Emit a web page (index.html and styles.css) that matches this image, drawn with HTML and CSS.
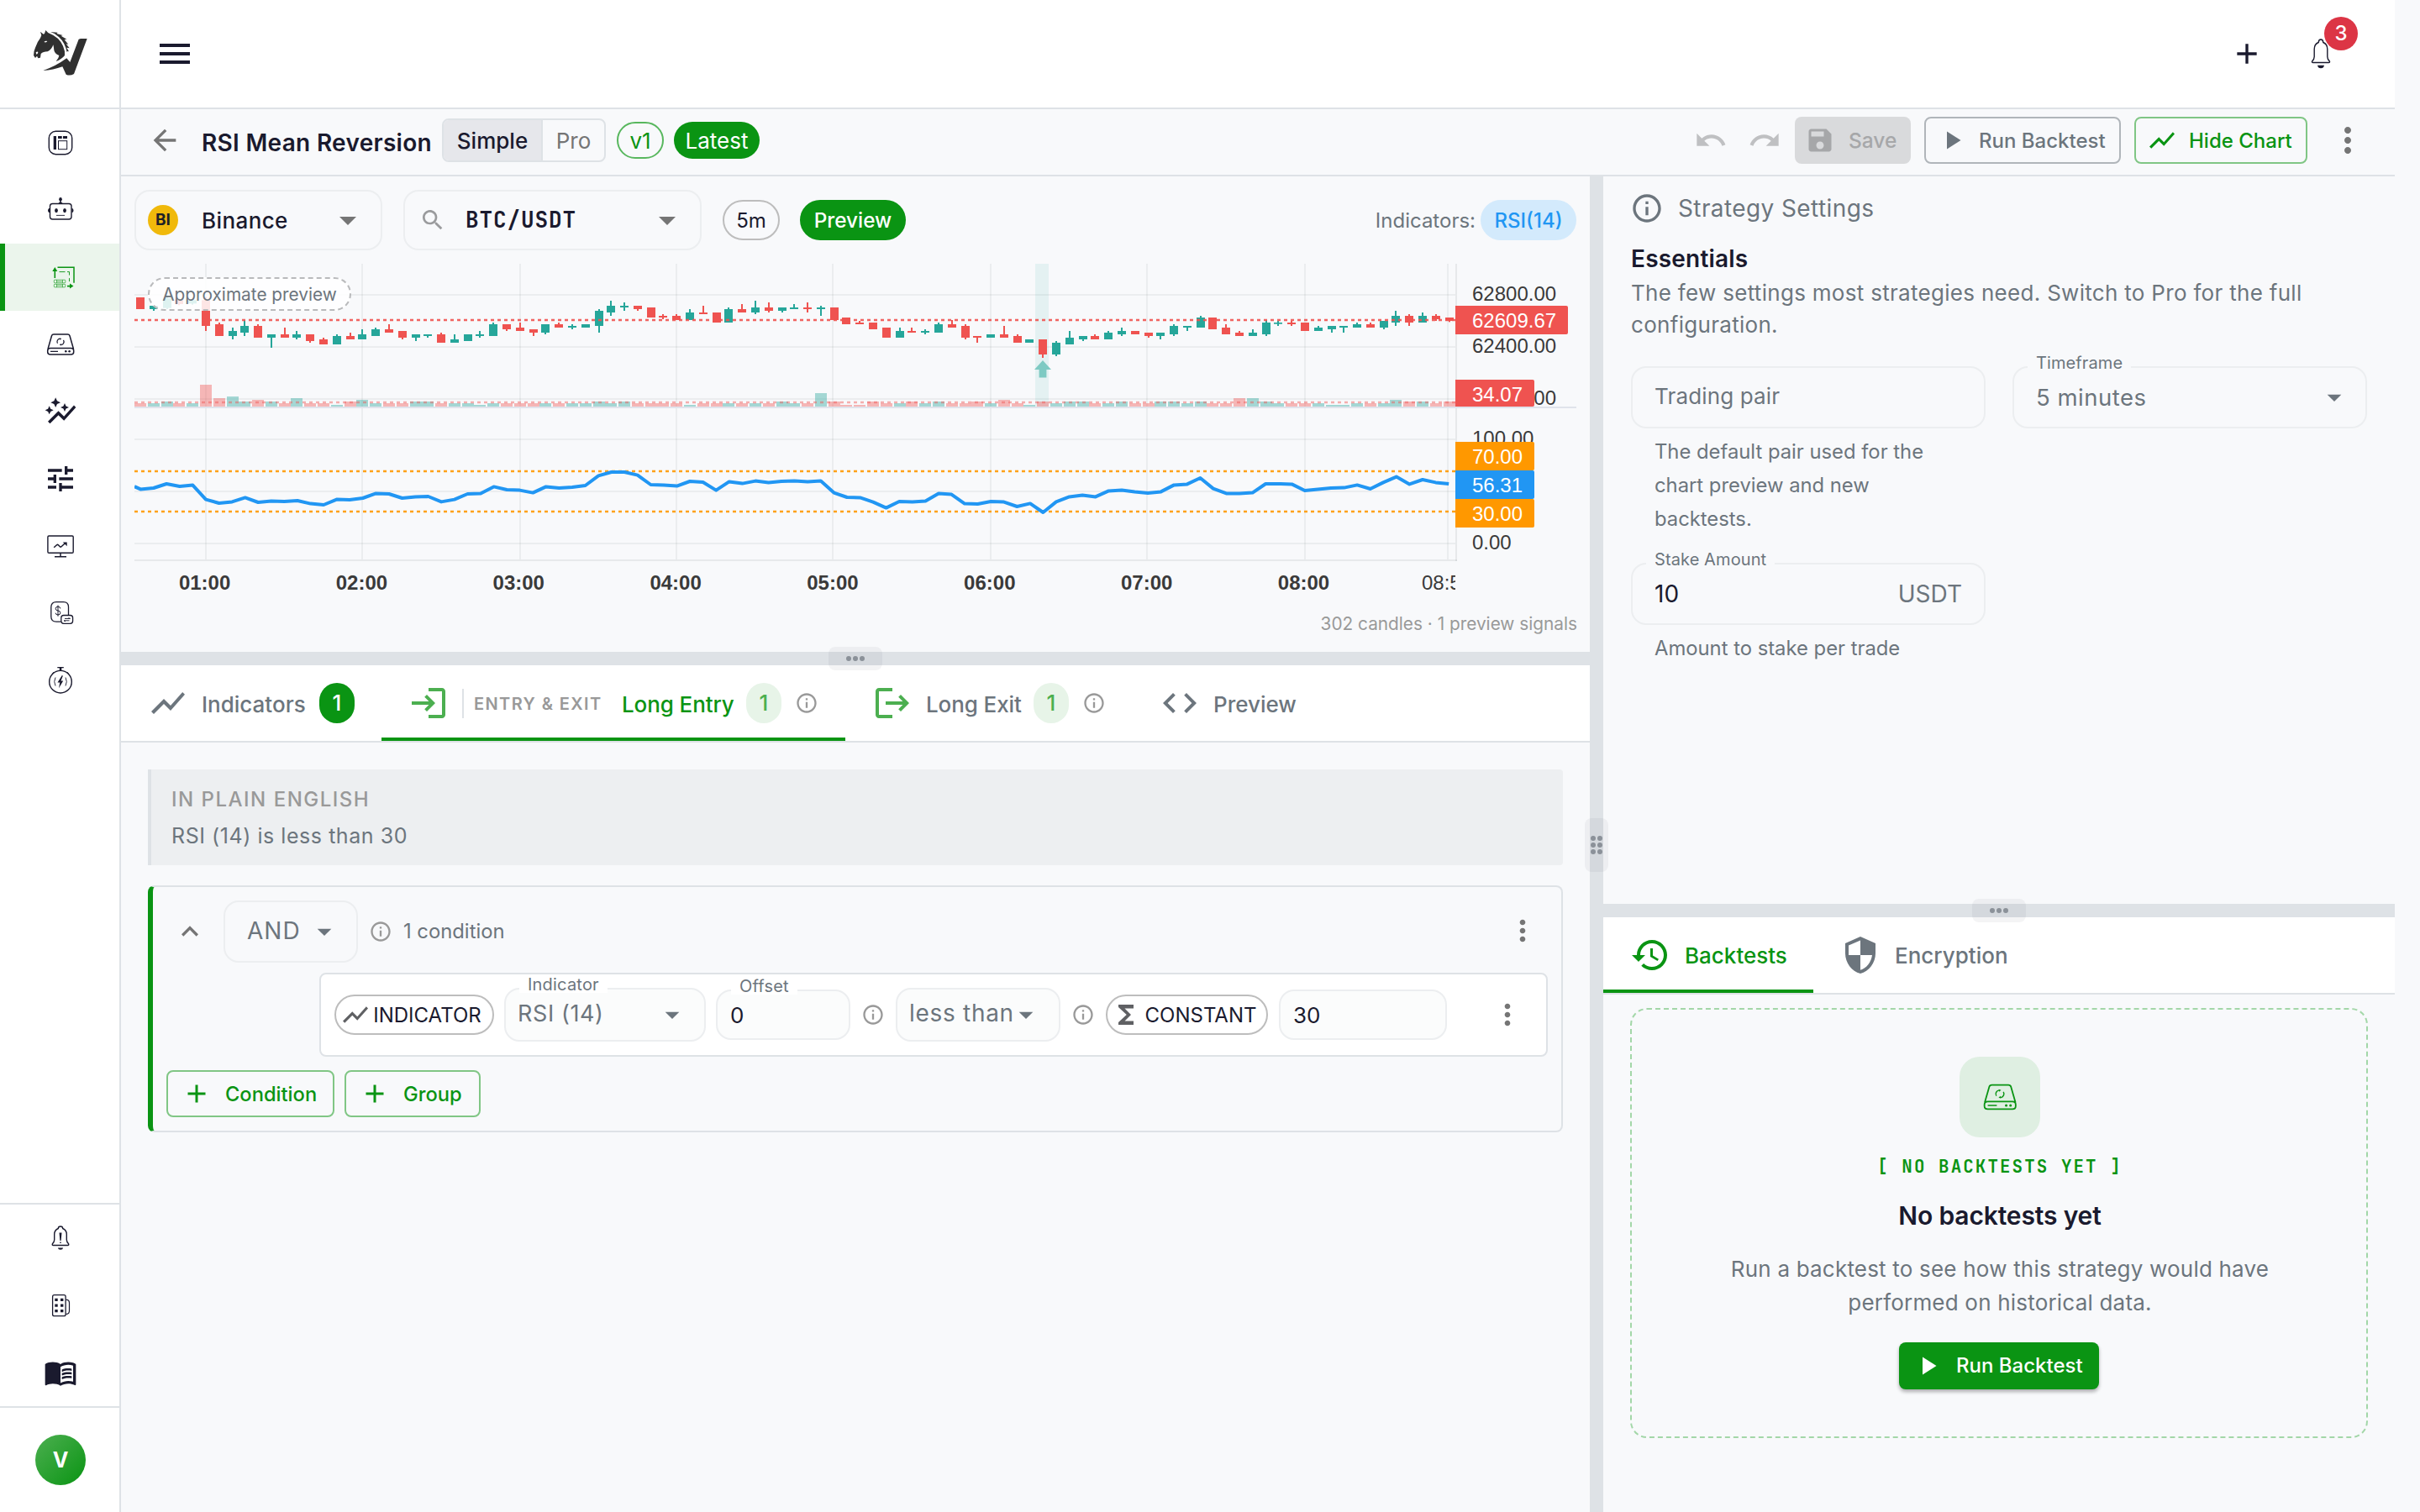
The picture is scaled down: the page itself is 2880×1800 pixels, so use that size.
FILE: index.html
```html
<!DOCTYPE html>
<html lang="en">
<head>
    <meta charset="UTF-8">
    <meta name="viewport" content="width=device-width, initial-scale=1.0">
    <title>RSI Mean Reversion</title>
    <link rel="stylesheet" href="styles.css">
</head>
<body>
    <!-- icon sprite -->
    <svg class="sprite" aria-hidden="true">
        <symbol id="i-menu" viewBox="0 0 24 24"><path d="M3 18h18v-2H3v2zm0-5h18v-2H3v2zm0-7v2h18V6H3z"/></symbol>
        <symbol id="i-back" viewBox="0 0 24 24"><path d="M20 11H7.83l5.59-5.59L12 4l-8 8 8 8 1.41-1.41L7.83 13H20v-2z"/></symbol>
        <symbol id="i-drop" viewBox="0 0 24 24"><path d="m7 10 5 5 5-5z"/></symbol>
        <symbol id="i-undo" viewBox="0 0 24 24"><path d="M12.5 8c-2.65 0-5.05.99-6.9 2.6L2 7v9h9l-3.62-3.62c1.39-1.16 3.16-1.88 5.12-1.88 3.54 0 6.55 2.31 7.6 5.5l2.37-.78C21.08 11.03 17.15 8 12.5 8z"/></symbol>
        <symbol id="i-redo" viewBox="0 0 24 24"><path d="M18.4 10.6C16.55 8.99 14.15 8 11.5 8c-4.65 0-8.58 3.03-9.96 7.22L3.9 16c1.05-3.19 4.05-5.5 7.6-5.5 1.95 0 3.73.72 5.12 1.88L13 16h9V7l-3.6 3.6z"/></symbol>
        <symbol id="i-save" viewBox="0 0 24 24"><path d="M17 3H5c-1.11 0-2 .9-2 2v14c0 1.1.89 2 2 2h14c1.1 0 2-.9 2-2V7l-4-4zm-5 16c-1.66 0-3-1.34-3-3s1.34-3 3-3 3 1.34 3 3-1.34 3-3 3zm3-10H5V5h10v4z"/></symbol>
        <symbol id="i-play" viewBox="0 0 24 24"><path d="M8 5v14l11-7z"/></symbol>
        <symbol id="i-chart" viewBox="0 0 24 24"><path d="m3.5 18.49 6-6.01 4 4L22 6.92l-1.41-1.41-7.09 7.97-4-4L2 16.99z"/></symbol>
        <symbol id="i-more" viewBox="0 0 24 24"><path d="M12 8c1.1 0 2-.9 2-2s-.9-2-2-2-2 .9-2 2 .9 2 2 2zm0 2c-1.1 0-2 .9-2 2s.9 2 2 2 2-.9 2-2-.9-2-2-2zm0 6c-1.1 0-2 .9-2 2s.9 2 2 2 2-.9 2-2-.9-2-2-2z"/></symbol>
        <symbol id="i-info" viewBox="0 0 24 24"><path d="M11 7h2v2h-2zm0 4h2v6h-2zm1-9C6.48 2 2 6.48 2 12s4.48 10 10 10 10-4.48 10-10S17.52 2 12 2zm0 18c-4.41 0-8-3.59-8-8s3.59-8 8-8 8 3.59 8 8-3.59 8-8 8z"/></symbol>
        <symbol id="i-add" viewBox="0 0 24 24"><path d="M19 13h-6v6h-2v-6H5v-2h6V5h2v6h6v2z"/></symbol>
        <symbol id="i-search" viewBox="0 0 24 24"><path d="M15.5 14h-.79l-.28-.27C15.41 12.59 16 11.11 16 9.5 16 5.91 13.09 3 9.5 3S3 5.91 3 9.5 5.91 16 9.5 16c1.61 0 3.09-.59 4.23-1.57l.27.28v.79l5 4.99L20.49 19l-4.99-5zm-6 0C7.01 14 5 11.99 5 9.5S7.01 5 9.5 5 14 7.01 14 9.5 11.99 14 9.5 14z"/></symbol>
        <symbol id="i-up" viewBox="0 0 24 24"><path d="m12 8-6 6 1.41 1.41L12 10.83l4.59 4.58L18 14z"/></symbol>
        <symbol id="i-login" viewBox="0 0 24 24"><path d="M11 7 9.6 8.4l2.6 2.6H2v2h10.2l-2.6 2.6L11 17l5-5-5-5zm9 12h-8v2h8c1.1 0 2-.9 2-2V5c0-1.1-.9-2-2-2h-8v2h8v14z"/></symbol>
        <symbol id="i-logout" viewBox="0 0 24 24"><path d="m17 7-1.41 1.41L18.17 11H8v2h10.17l-2.58 2.58L17 17l5-5zM4 5h8V3H4c-1.1 0-2 .9-2 2v14c0 1.1.9 2 2 2h8v-2H4V5z"/></symbol>
        <symbol id="i-code" viewBox="0 0 24 24"><path d="M9.4 16.6 4.8 12l4.6-4.6L8 6l-6 6 6 6 1.4-1.4zm5.2 0 4.6-4.6-4.6-4.6L16 6l6 6-6 6-1.4-1.4z"/></symbol>
        <symbol id="i-history" viewBox="0 0 24 24"><path d="M13 3c-4.97 0-9 4.03-9 9H1l3.89 3.89.07.14L9 12H6c0-3.87 3.13-7 7-7s7 3.13 7 7-3.13 7-7 7c-1.93 0-3.68-.79-4.94-2.06l-1.42 1.42C8.27 19.99 10.51 21 13 21c4.97 0 9-4.03 9-9s-4.03-9-9-9zm-1 5v5l4.28 2.54.72-1.21-3.5-2.08V8H12z"/></symbol>
        <symbol id="i-shield" viewBox="0 0 24 24"><path d="M12 1 3 5v6c0 5.55 3.84 10.74 9 12 5.16-1.26 9-6.45 9-12V5l-9-4zm0 10.99h7c-.53 4.12-3.28 7.79-7 8.94V12H5V6.3l7-3.11v8.8z"/></symbol>
        <symbol id="i-sigma" viewBox="0 0 24 24"><path d="M18 4H6v2l6.5 6L6 18v2h12v-3h-7l5-5-5-5h7z"/></symbol>
        <symbol id="i-tune" viewBox="0 0 24 24"><path d="M3 17v2h6v-2H3zM3 5v2h10V5H3zm10 16v-2h8v-2h-8v-2h-2v6h2zM7 9v2H3v2h4v2h2V9H7zm14 4v-2H11v2h10zm-6-4h2V7h4V5h-4V3h-2v6z"/></symbol>
        <symbol id="i-graph" viewBox="0 0 24 24"><path d="M14.06 9.94 12 9l2.06-.94L15 6l.94 2.06L18 9l-2.06.94L15 12l-.94-2.06zM4 14l.94-2.06L7 11l-2.06-.94L4 8l-.94 2.06L1 11l2.06.94L4 14zm4.5-5 1.09-2.41L12 5.5 9.59 4.41 8.5 2 7.41 4.41 5 5.5l2.41 1.09L8.5 9zm-4 11.5 6-6.01 4 4L23 8.93l-1.41-1.41-7.09 7.97-4-4L3 19l1.5 1.5z"/></symbol>
        <symbol id="i-book" viewBox="0 0 24 24"><path d="M21 5c-1.11-.35-2.33-.5-3.5-.5-1.95 0-4.05.4-5.5 1.5-1.45-1.1-3.55-1.5-5.5-1.5S2.45 4.9 1 6v14.65c0 .25.25.5.5.5.1 0 .15-.05.25-.05C3.1 20.45 5.05 20 6.5 20c1.95 0 4.05.4 5.5 1.5 1.35-.85 3.8-1.5 5.5-1.5 1.65 0 3.35.3 4.75 1.05.1.05.15.05.25.05.25 0 .5-.25.5-.5V6c-.6-.45-1.25-.75-2-1zm0 13.5c-1.1-.35-2.3-.5-3.5-.5-1.7 0-4.15.65-5.5 1.5V8c1.35-.85 3.8-1.5 5.5-1.5 1.2 0 2.4.15 3.5.5v11.5z"/><path d="M17.5 10.5c.88 0 1.73.09 2.5.26V9.24c-.79-.15-1.64-.24-2.5-.24-1.7 0-3.24.29-4.5.83v1.66c1.13-.64 2.7-.99 4.5-.99zM13 12.49v1.66c1.13-.64 2.7-.99 4.5-.99.88 0 1.73.09 2.5.26V11.9c-.79-.15-1.64-.24-2.5-.24-1.7 0-3.24.3-4.5.83zM17.5 14.33c-1.7 0-3.24.29-4.5.83v1.66c1.13-.64 2.7-.99 4.5-.99.88 0 1.73.09 2.5.26v-1.52c-.79-.16-1.64-.24-2.5-.24z"/></symbol>

        <symbol id="i-dash" viewBox="0 0 40 40">
            <rect x="6.300" y="6.300" width="27.400" height="27.400" rx="8" fill="none" stroke="currentColor" stroke-width="1.400"/>
            <path d="M11.700 12H15v16h-3.300zM17 12h4.700v3H17zM23 12h5v3h-5z"/>
            <rect x="17.500" y="17.700" width="10.200" height="10" fill="none" stroke="currentColor"/>
        </symbol>
        <symbol id="i-bot" viewBox="0 0 40 40">
            <rect x="7.500" y="12.500" width="25.500" height="18.500" rx="3" fill="none" stroke="currentColor" stroke-width="1.400"/>
            <ellipse cx="20" cy="7.200" rx="1.800" ry="2.200"/><path d="M19.300 8h1.400v2.200l2.300 2.300h-6l2.300-2.300z"/>
            <path d="M7 18H6.200Q5 19 5 20.500T6.200 23H7zM33.500 18h.8q1.200 1 1.200 2.500T34.300 23h-.8z"/>
            <ellipse cx="15" cy="20.600" rx="1.900" ry="2.600"/><ellipse cx="25" cy="20.600" rx="1.900" ry="2.600"/>
            <path d="M15 25.900h10v.9H15z"/>
        </symbol>
        <symbol id="i-strategy" viewBox="0 0 40 40">
            <path d="M16.500 8.300H36v18.500" fill="none" stroke="currentColor" stroke-width="1.500"/>
            <path d="M13.300 8l3 5h-2.200v8h-1.600v-8h-2.200zM35.500 30.600l-4.500 3v-2.200h-3v-1.600h3v-2.200z"/>
            <path d="M18.500 13.600h7m2.500 0h2.500v4m0 3.500v4" fill="none" stroke="currentColor" stroke-width=".9"/>
            <g fill="none" stroke="currentColor" stroke-width=".6"><rect x="12.300" y="23.200" width="13.500" height="3.600" rx=".8"/><rect x="12.300" y="28.300" width="13.500" height="3.600" rx=".8"/><path d="M15.500 23.200v3.600m7-3.600v3.600m-7 1.500v3.600m7-3.600v3.600M15.500 25h7m-7 5h7"/></g>
        </symbol>
        <symbol id="i-disk" viewBox="0 0 40 40">
            <path d="M5 25.500 9.500 9.800Q10 8 12 8h16.500q2 0 2.500 1.800l4.500 15.700M8 24.500h24.500q3.200 0 3.200 3v1.500q0 3-3.200 3H8q-3.300 0-3.300-3v-1.500q0-3 3.300-3z" fill="none" stroke="currentColor" stroke-width="1.500"/>
            <path d="M19.200 13.200a3.700 3.700 0 0 0-2.700 5.600m4.300 1.700a3.700 3.700 0 0 0 2.700-5.600" fill="none" stroke="currentColor" stroke-width="1.200"/>
            <path d="M19 12.200l2.300 1-2.100 1.500zM21 21.500l-2.300-1 2.100-1.500zM8 27.700h9v1.200H8z"/>
            <circle cx="26.300" cy="28.300" r="1.300"/><circle cx="30.600" cy="28.300" r="1.300"/>
        </symbol>
        <symbol id="i-monitor" viewBox="0 0 40 40">
            <rect x="4.900" y="8" width="30.300" height="20.300" rx="1.300" fill="none" stroke="currentColor" stroke-width="1.400"/>
            <path d="M20 28.500v4M13 32.700h14" fill="none" stroke="currentColor" stroke-width="1.500"/>
            <path d="M12.200 21.800l3.300-3q1-.8 1.900 0l1.900 1.900q.8.800 1.700 0l5-4.500" fill="none" stroke="currentColor" stroke-width="1.500"/>
            <path d="M22.800 15.400h4.900v4.800l-2-2z"/>
        </symbol>
        <symbol id="i-coin" viewBox="0 0 40 40">
            <path d="M20.500 30.200H15Q8.800 30.200 8.800 24V13Q8.800 6.600 15 6.600h8.500q6 0 6 6v9.600" fill="none" stroke="currentColor" stroke-width="1.300"/>
            <rect x="20.800" y="22.500" width="13.800" height="9.800" rx="3" fill="none" stroke="currentColor" stroke-width="1.300"/>
            <path d="M19.800 14.500q0-2.300-2.800-2.300t-2.800 2.300 2.800 2.500 2.800 2.600-2.800 2.400-2.800-2.300M17 10.500v13.200" fill="none" stroke="currentColor"/>
            <path d="M25 26.500h6.500l-2-1M30.500 28.800H24l2 1" fill="none" stroke="currentColor" stroke-width=".9"/>
        </symbol>
        <symbol id="i-timer" viewBox="0 0 40 40">
            <circle cx="20" cy="21.700" r="13.300" fill="none" stroke="currentColor" stroke-width="1.400"/>
            <path d="M16.300 4h7.500v1.300h-2.500V8h-2.500V5.300h-2.500zM9.500 12.800l2-2.800 1.200 1zM30.500 12.800l-2-2.800-1.200 1z"/>
            <path d="M21.800 14l-5.300 8.600h2.800L18 29.300l5.200-8.700h-2.700l2.400-6.100z"/>
            <path d="M14 16.500q-2.600 5 0 10M26 16.500q2.600 5 0 10" fill="none" stroke="currentColor" stroke-width=".9"/>
        </symbol>
        <symbol id="i-alert" viewBox="0 0 40 40">
            <path d="M17.300 8.500Q17.300 6 20 6t2.700 2.500q4.600 1.800 4.600 7V22q0 2.500 2.300 4.800.6 1.700-1 1.700H11.400q-1.600 0-1-1.700 2.300-2.300 2.300-4.800v-6.500q0-5.200 4.600-7z" fill="none" stroke="currentColor" stroke-width="1.400"/>
            <path d="M18.500 13.500h3L20.600 23h-1.200zM19.300 24.500h1.400V26h-1.400zM16.800 31.500h6.400q-.5 2.300-3.200 2.300t-3.200-2.300z"/>
        </symbol>
        <symbol id="i-building" viewBox="0 0 40 40">
            <rect x="10.600" y="7.700" width="15.500" height="25" rx="2" fill="none" stroke="currentColor" stroke-width="1.300"/>
            <path d="M26.500 13.300h.8q3.200 0 3.200 4v9q0 4-3.200 4h-.8" fill="none" stroke="currentColor" stroke-width="1.200"/>
            <path d="M13.300 11.700h3.400v3.300h-3.400zM20 11.700h3.400v3.300H20zM13.300 18.400h3.400v3.300h-3.400zM20 18.400h3.400v3.300H20zM13.300 25h3.400v3.300h-3.400zM20 25h3.400v3.300H20z"/>
        </symbol>
        <symbol id="i-bell" viewBox="0 0 40 40">
            <path d="M17.200 6.500Q17.400 3 20 3t2.800 3.500q5 2 5 8v9q0 2.800 2.600 5.600.5 1.400-1 1.400H10.600q-1.500 0-1-1.400 2.600-2.800 2.600-5.600v-9q0-6 5-8z" fill="none" stroke="currentColor" stroke-width="1.400"/>
            <path d="M16 33.700h8q-.6 3.600-4 3.600t-4-3.600z"/>
        </symbol>
    </svg>

    <div class="app">
        <aside class="sidebar">
            <div class="logo">
                <svg viewBox="60 48 192 162" width="64" height="54">
                    <path class="logo-ink" d="M103 48Q111 58 118 60Q150 72 165 104Q173 122 171 138Q160 152 140 159Q150 148 151 138Q137 134 133 120Q132 108 130 100Q124 118 110 124Q94 124 86 132L84 146L76 148L72 140L66 147L60 138Q60 122 66 110Q74 88 84 76L88 66L84 53L95 62L99 60z"/>
                    <path class="logo-ink" d="M120 54L146 56L142 60L164 66L158 68L178 80L170 82L184 98L176 97L188 112L178 110L186 124Q180 122 179 126Q172 92 150 72Q136 58 120 54z"/>
                    <path class="logo-ink" d="M228 78H251L204 204Q190 212 176 206L163 178Q130 190 94 192Q140 176 178 148L190 162L221 80z"/>
                    <path class="logo-gap" d="M97 90Q103 84 109 87Q105 94 97 90zM68 127Q74 122 76 126Q76 133 70 134z"/>
                </svg>
            </div>
            <nav class="side-nav">
                <a class="side-item"><svg><use href="#i-dash"/></svg></a>
                <a class="side-item"><svg><use href="#i-bot"/></svg></a>
                <a class="side-item active"><svg><use href="#i-strategy"/></svg></a>
                <a class="side-item"><svg><use href="#i-disk"/></svg></a>
                <a class="side-item"><svg><use href="#i-graph"/></svg></a>
                <a class="side-item"><svg><use href="#i-tune"/></svg></a>
                <a class="side-item"><svg><use href="#i-monitor"/></svg></a>
                <a class="side-item"><svg><use href="#i-coin"/></svg></a>
                <a class="side-item"><svg><use href="#i-timer"/></svg></a>
            </nav>
            <nav class="side-nav side-bottom">
                <a class="side-item"><svg><use href="#i-alert"/></svg></a>
                <a class="side-item"><svg><use href="#i-building"/></svg></a>
                <a class="side-item"><svg><use href="#i-book"/></svg></a>
            </nav>
            <div class="side-user"><span class="avatar">V</span></div>
        </aside>

        <div class="main">
            <header class="topbar">
                <svg class="ic48"><use href="#i-menu"/></svg>
                <div class="topbar-right">
                    <svg class="ic40"><use href="#i-add"/></svg>
                    <div class="bell">
                        <svg class="ic40"><use href="#i-bell"/></svg>
                        <span class="bell-badge">3</span>
                    </div>
                </div>
            </header>

            <div class="toolbar">
                <svg class="ic40 grey"><use href="#i-back"/></svg>
                <h1 class="title">RSI Mean Reversion</h1>
                <div class="toggle"><span class="toggle-on">Simple</span><span>Pro</span></div>
                <span class="chip chip-outline">v1</span>
                <span class="chip chip-solid">Latest</span>
                <div class="toolbar-right">
                    <svg class="ic40 faded"><use href="#i-undo"/></svg>
                    <svg class="ic40 faded redo"><use href="#i-redo"/></svg>
                    <button class="btn btn-save"><svg><use href="#i-save"/></svg>Save</button>
                    <button class="btn btn-run"><svg><use href="#i-play"/></svg>Run Backtest</button>
                    <button class="btn btn-hide"><svg><use href="#i-chart"/></svg>Hide Chart</button>
                    <svg class="ic48 grey"><use href="#i-more"/></svg>
                </div>
            </div>

            <div class="workspace">
                <div class="col-left">
                    <section class="chart-panel">
                        <div class="chart-controls">
                            <div class="select exchange">
                                <span class="coin">BI</span>
                                <span class="select-text">Binance</span>
                                <svg class="ic48 grey"><use href="#i-drop"/></svg>
                            </div>
                            <div class="select pair">
                                <svg class="search"><use href="#i-search"/></svg>
                                <span class="select-text mono">BTC/USDT</span>
                                <svg class="ic48 grey"><use href="#i-drop"/></svg>
                            </div>
                            <span class="chip chip-tf">5m</span>
                            <span class="chip chip-preview">Preview</span>
                            <div class="indicators">Indicators:<span class="chip chip-rsi">RSI(14)</span></div>
                        </div>
                        <div class="chart">
                            <svg id="chart" viewBox="0 7 858 203" width="1716" height="406"></svg>
                            <span class="approx">Approximate preview</span>
                        </div>
                        <div class="chart-foot">302 candles · 1 preview signals</div>
                    </section>

                    <div class="split-h"><span class="grip"><i></i><i></i><i></i></span></div>

                    <div class="tabs tabs-rules">
                        <div class="tab t-ind">
                            <svg class="ic48"><use href="#i-chart"/></svg>
                            <span class="tab-text">Indicators</span>
                            <span class="count count-solid">1</span>
                        </div>
                        <div class="tab t-entry active">
                            <svg class="ic48 green"><use href="#i-login"/></svg>
                            <span class="tab-group">ENTRY &amp; EXIT</span>
                            <span class="tab-text">Long Entry</span>
                            <span class="count">1</span>
                            <svg class="info"><use href="#i-info"/></svg>
                        </div>
                        <div class="tab t-exit">
                            <svg class="ic48 green"><use href="#i-logout"/></svg>
                            <span class="tab-text">Long Exit</span>
                            <span class="count">1</span>
                            <svg class="info"><use href="#i-info"/></svg>
                        </div>
                        <div class="tab t-prev">
                            <svg class="ic48"><use href="#i-code"/></svg>
                            <span class="tab-text">Preview</span>
                        </div>
                    </div>

                    <section class="editor">
                        <div class="plain">
                            <div class="plain-label">IN PLAIN ENGLISH</div>
                            <div class="plain-text">RSI (14) is less than 30</div>
                        </div>

                        <div class="group">
                            <div class="group-head">
                                <svg class="ic40 grey"><use href="#i-up"/></svg>
                                <div class="select logic"><span class="select-text">AND</span><svg class="ic40"><use href="#i-drop"/></svg></div>
                                <svg class="info"><use href="#i-info"/></svg>
                                <span class="group-count">1 condition</span>
                                <svg class="ic40 grey more"><use href="#i-more"/></svg>
                            </div>
                            <div class="condition">
                                <span class="chip chip-type"><svg class="type-ic"><use href="#i-chart"/></svg>INDICATOR</span>
                                <div class="select f-ind">
                                    <label>Indicator</label>
                                    <span class="select-text">RSI (14)</span>
                                    <svg class="ic40"><use href="#i-drop"/></svg>
                                </div>
                                <div class="select f-off">
                                    <label>Offset</label>
                                    <span class="select-text">0</span>
                                </div>
                                <svg class="info"><use href="#i-info"/></svg>
                                <div class="select f-op">
                                    <span class="select-text">less than</span>
                                    <svg class="ic40"><use href="#i-drop"/></svg>
                                </div>
                                <svg class="info"><use href="#i-info"/></svg>
                                <span class="chip chip-type chip-const"><svg class="type-ic"><use href="#i-sigma"/></svg>CONSTANT</span>
                                <div class="select f-val"><span class="select-text">30</span></div>
                                <svg class="ic40 grey more"><use href="#i-more"/></svg>
                            </div>
                            <div class="group-actions">
                                <button class="btn btn-add btn-cond"><svg><use href="#i-add"/></svg>Condition</button>
                                <button class="btn btn-add"><svg><use href="#i-add"/></svg>Group</button>
                            </div>
                        </div>
                    </section>
                </div>

                <div class="split-v"><span class="grip grip-v"><i></i><i></i><i></i><i></i><i></i><i></i></span></div>

                <div class="col-right">
                    <section class="settings">
                        <div class="settings-head"><svg class="ic40"><use href="#i-info"/></svg>Strategy Settings</div>
                        <h2>Essentials</h2>
                        <p class="settings-desc">The few settings most strategies need. Switch to Pro for the full configuration.</p>
                        <div class="settings-grid">
                            <div class="cell">
                                <div class="select field"><span class="select-text ph">Trading pair</span></div>
                                <p class="helper">The default pair used for the chart preview and new backtests.</p>
                            </div>
                            <div class="cell">
                                <div class="select field">
                                    <label>Timeframe</label>
                                    <span class="select-text tf">5 minutes</span>
                                    <svg class="ic40"><use href="#i-drop"/></svg>
                                </div>
                            </div>
                            <div class="cell">
                                <div class="select field">
                                    <label>Stake Amount</label>
                                    <span class="select-text dark">10</span>
                                    <span class="unit">USDT</span>
                                </div>
                                <p class="helper">Amount to stake per trade</p>
                            </div>
                        </div>
                    </section>

                    <div class="split-h"><span class="grip"><i></i><i></i><i></i></span></div>

                    <div class="tabs">
                        <div class="tab t-back active">
                            <svg class="ic48"><use href="#i-history"/></svg>
                            <span class="tab-text">Backtests</span>
                        </div>
                        <div class="tab t-enc">
                            <svg class="ic48"><use href="#i-shield"/></svg>
                            <span class="tab-text">Encryption</span>
                        </div>
                    </div>

                    <section class="empty">
                        <div class="empty-tile"><svg class="ic48"><use href="#i-disk"/></svg></div>
                        <div class="empty-tag">[ NO BACKTESTS YET ]</div>
                        <h3>No backtests yet</h3>
                        <p>Run a backtest to see how this strategy would have performed on historical data.</p>
                        <button class="btn btn-primary"><svg><use href="#i-play"/></svg>Run Backtest</button>
                    </section>
                </div>
            </div>
        </div>
    </div>

    <script src="chart.js"></script>
</body>
</html>
```

FILE: styles.css
```css
:root {
    --green: #0a9413;
    --text: #1a1a2e;
    --muted: #6c757d;
    --grey: #757575;
    --line: #dee2e6;
    --soft-line: #eceef0;
    --bg: #f8f9fb;
    --mono: 'JetBrains Mono', 'DejaVu Sans Mono', monospace;
}

* {
    margin: 0;
    padding: 0;
    box-sizing: border-box;
}

body {
    background: var(--bg);
    color: var(--text);
    font-family: Inter, 'Liberation Sans', sans-serif;
    font-size: 28px;
    overflow: hidden;
}

svg {
    display: block;
    flex: none;
    fill: currentColor;
}

.sprite {
    width: 0;
    height: 0;
    position: absolute;
}

.ic40 { width: 40px; height: 40px; }
.ic48 { width: 48px; height: 48px; }
.grey { color: var(--grey); }
.green { color: #4caf50; }

.app {
    display: flex;
    width: 2850px;
    height: 1800px;
}

/* sidebar */
.sidebar {
    display: flex;
    flex-direction: column;
    width: 144px;
    background: #fff;
    border-right: 2px solid var(--line);
}

.logo {
    height: 130px;
    padding: 36px 0 0 40px;
    border-bottom: 2px solid var(--line);
}

.logo-ink { fill: #303030; }
.logo-gap { fill: #fff; }

.side-item {
    display: flex;
    align-items: center;
    justify-content: center;
    width: 142px;
    height: 80px;
    padding-left: 2px;
}

    .side-item svg {
        width: 40px;
        height: 40px;
    }

    .side-item.active {
        background: #ebf5ec;
        color: var(--green);
        box-shadow: inset 6px 0 0 var(--green);
    }

.side-bottom {
    margin-top: auto;
    border-top: 2px solid var(--line);
    border-bottom: 2px solid var(--line);
}

.side-user {
    height: 124px;
    padding: 32px 0 0 42px;
}

.avatar {
    display: flex;
    align-items: center;
    justify-content: center;
    width: 60px;
    height: 60px;
    border-radius: 50%;
    background: linear-gradient(135deg, #4caf50, #0a9413);
    color: #fff;
    font-size: 25px;
    font-weight: 700;
}

/* top bar */
.main {
    flex: 1;
    display: flex;
    flex-direction: column;
    min-width: 0;
}

.topbar {
    display: flex;
    align-items: center;
    justify-content: space-between;
    height: 130px;
    padding: 0 68px 0 40px;
    background: #fff;
    border-bottom: 2px solid var(--line);
}

.topbar-right {
    display: flex;
    gap: 48px;
}

.bell {
    position: relative;
}

.bell-badge {
    position: absolute;
    left: 24px;
    top: -24px;
    width: 40px;
    height: 40px;
    border-radius: 20px;
    background: #dc3545;
    color: #fff;
    font-size: 24px;
    font-weight: 500;
    line-height: 40px;
    text-align: center;
}

/* toolbar */
.toolbar {
    display: flex;
    align-items: center;
    height: 80px;
    padding: 0 32px 4px;
    border-bottom: 2px solid var(--line);
}

.title {
    width: 286px;
    margin-left: 24px;
    padding-top: 5px;
    font-size: 28px;
    font-weight: 600;
    letter-spacing: 0.3px;
    white-space: nowrap;
}

.toggle {
    display: flex;
    width: 195px;
    height: 52px;
    border: 2px solid var(--line);
    border-radius: 8px;
    font-size: 26px;
    line-height: 50px;
    text-align: center;
    color: var(--grey);
    overflow: hidden;
}

    .toggle span {
        flex: 1;
    }

    .toggle .toggle-on {
        flex: none;
        width: 118px;
        background: #e6e7eb;
        color: var(--text);
        font-weight: 500;
        border-right: 2px solid var(--line);
    }

.chip {
    display: inline-flex;
    align-items: center;
    justify-content: center;
    flex: none;
    height: 48px;
    border-radius: 24px;
    font-size: 26px;
    white-space: nowrap;
}

.chip-outline {
    width: 56px;
    height: 44px;
    margin-left: 13px;
    border: 2px solid #58b75e;
    color: var(--green);
}

.chip-solid {
    width: 102px;
    height: 44px;
    margin-left: 12px;
    background: var(--green);
    color: #fff;
}

.toolbar-right {
    display: flex;
    align-items: center;
    margin-left: auto;
}

    .toolbar-right .faded {
        color: #bfc0c2;
    }

    .toolbar-right .redo {
        margin: 0 16px 0 24px;
    }

.btn {
    display: flex;
    align-items: center;
    height: 56px;
    border: 2px solid transparent;
    border-radius: 8px;
    background: none;
    font-family: inherit;
    font-size: 24px;
    font-weight: 500;
    white-space: nowrap;
}

    .btn svg {
        width: 36px;
        height: 36px;
        margin-right: 16px;
    }

.btn-save {
    width: 138px;
    padding-left: 10px;
    background: #d9dadc;
    color: #a6a7a9;
    font-size: 24.500px;
}

.btn-run {
    width: 234px;
    margin-left: 16px;
    padding-left: 13px;
    border-color: #b0b5ba;
    color: var(--muted);
}

.btn-hide {
    width: 206px;
    margin: 0 24px 0 16px;
    padding-left: 13px;
    border-color: #80c685;
    color: var(--green);
}

.btn-run svg,
.btn-hide svg {
    margin-right: 14px;
}

/* workspace */
.workspace {
    flex: 1;
    display: flex;
    min-height: 0;
}

.col-left {
    display: flex;
    flex-direction: column;
    width: 1748px;
}

.col-right {
    flex: 1;
    display: flex;
    flex-direction: column;
}

.split-h {
    position: relative;
    height: 16px;
    background: var(--line);
}

.split-v {
    position: relative;
    width: 16px;
    background: var(--line);
}

.grip {
    position: absolute;
    z-index: 2;
    left: 50%;
    top: -6px;
    width: 64px;
    height: 28px;
    margin-left: -32px;
    display: flex;
    align-items: center;
    justify-content: center;
    gap: 2px;
    border-radius: 8px;
    background: rgba(30, 30, 50, 0.05);
}

    .grip i {
        width: 6px;
        height: 6px;
        border-radius: 50%;
        background: #8b9199;
    }

.grip-v {
    left: 8px;
    top: 764px;
    width: 28px;
    height: 64px;
    margin-left: -14px;
    flex-wrap: wrap;
    align-content: center;
    padding: 0 6px;
}

/* selects and fields */
.select {
    position: relative;
    display: flex;
    align-items: center;
    flex: none;
    height: 72px;
    border: 2px solid var(--soft-line);
    border-radius: 18px;
    white-space: nowrap;
}

    .select > .ic40,
    .select > .ic48 {
        margin-left: auto;
    }

    .select label {
        position: absolute;
        left: 16px;
        top: -19px;
        padding: 0 10px;
        height: 26px;
        line-height: 26px;
        font-size: 20px;
        letter-spacing: 0.1px;
        color: var(--muted);
        background: var(--bg);
    }

.chart-panel {
    height: 566px;
    padding: 16px 16px 0;
}

.chart-controls {
    display: flex;
    align-items: center;
    height: 72px;
}

.exchange {
    width: 295px;
    padding: 0 14px;
}

.coin {
    width: 36px;
    height: 36px;
    border-radius: 50%;
    background: #f0b90b;
    color: #1e2026;
    font-size: 19px;
    font-weight: 700;
    line-height: 36px;
    text-align: center;
}

.exchange .select-text {
    margin-left: 28px;
    font-weight: 500;
    font-size: 26px;
    letter-spacing: 0.4px;
}

.exchange > .ic48,
.pair > .ic48 {
    margin-right: 1px;
}

.pair {
    width: 355px;
    margin-left: 25px;
    padding: 0 14px 0 17px;
}

    .pair .search {
        width: 32px;
        height: 32px;
        color: #9a9b9d;
    }

.mono {
    margin-left: 23px;
    padding-bottom: 2px;
    font-family: var(--mono);
    font-size: 26px;
    font-weight: 600;
    letter-spacing: 0.9px;
}

.chip-tf {
    width: 68px;
    margin-left: 25px;
    border: 2px solid #bdbdbd;
    font-size: 24px;
}

.chip-preview {
    width: 126px;
    margin-left: 24px;
    background: var(--green);
    color: #fff;
    font-weight: 500;
    font-size: 24.300px;
}

.indicators {
    display: flex;
    align-items: center;
    margin-left: auto;
    font-size: 24px;
    color: var(--muted);
}

.chip-rsi {
    width: 114px;
    margin-left: 6px;
    background: #d3eafc;
    color: #2196f3;
    font-weight: 500;
    font-size: 24px;
}

.chart {
    position: relative;
    height: 406px;
    margin-top: 16px;
}

.approx {
    position: absolute;
    left: 16px;
    top: 16px;
    width: 242px;
    height: 40px;
    border: 2px dashed #b9babc;
    border-radius: 20px;
    background: rgba(255, 255, 255, 0.85);
    color: var(--muted);
    font-size: 20.800px;
    line-height: 37px;
    text-align: center;
    white-space: nowrap;
}

.chart-foot {
    margin: 8px -1px 0 0;
    text-align: right;
    font-size: 20.800px;
    line-height: 30px;
    color: #999;
}

.axis {
    font-family: 'Liberation Sans', sans-serif;
    font-size: 12px;
    fill: #3a3a3a;
}

.axis-bold {
    font-weight: 700;
}

.axis-tag {
    fill: #fff;
}

/* tabs */
.tabs {
    display: flex;
    flex: none;
    height: 92px;
    background: #fff;
    border-bottom: 2px solid var(--line);
}

.tab {
    display: flex;
    align-items: center;
    padding: 4px 32px 0;
    border-bottom: 4px solid transparent;
    font-size: 26px;
    font-weight: 500;
    color: var(--muted);
    white-space: nowrap;
}

    .tab.active {
        border-color: var(--green);
        color: var(--green);
    }

    .tab > .ic48 {
        margin-right: 16px;
    }

.tabs-rules .tab-text {
    padding-top: 2px;
}

.t-ind { width: 310px; }
.t-entry { width: 552px; }
.t-exit { width: 342px; }
.t-back { width: 250px; }

.t-exit .tab-text,
.t-entry .tab-text {
    letter-spacing: -0.100px;
}

.tab-group {
    margin-right: 26px;
    padding-left: 12px;
    width: 164px;
    border-left: 2px solid var(--line);
    font-size: 20px;
    font-weight: 600;
    line-height: 34px;
    letter-spacing: 1.400px;
    color: #999;
}

.tabs-rules .tab-group {
    padding-top: 1px;
}

.count {
    width: 42px;
    height: 48px;
    margin-left: auto;
    border-radius: 24px;
    background: #e7f4e8;
    color: #4caf50;
    font-size: 26px;
    line-height: 48px;
    text-align: center;
}

.count-solid {
    background: var(--green);
    color: #fff;
}

.info {
    width: 28px;
    height: 28px;
    color: #999;
}

.tab .info {
    margin-left: 16px;
}

.t-back,
.t-enc {
    padding-left: 32px;
    padding-right: 0;
}

.t-back > .ic48,
.t-enc > .ic48 {
    margin-right: 17px;
}

/* rule editor */
.editor {
    padding: 32px;
}

.plain {
    height: 114px;
    padding: 19px 24px;
    border-left: 4px solid var(--line);
    border-radius: 0 4px 4px 0;
    background: #edeff1;
}

.plain-label {
    font-size: 24px;
    font-weight: 500;
    line-height: 34px;
    letter-spacing: 1.500px;
    color: #999;
}

.plain-text {
    margin-top: 6px;
    font-size: 25px;
    line-height: 40px;
    letter-spacing: 0.550px;
    color: var(--muted);
}

.group {
    height: 294px;
    margin-top: 24px;
    padding: 16px 16px 0 22px;
    border: 2px solid var(--line);
    border-left: 6px solid var(--green);
    border-radius: 8px;
}

.group-head {
    display: flex;
    align-items: center;
    height: 74px;
}

    .group-head > .grey:first-child {
        margin-left: 2px;
    }

    .group-head .info {
        margin-left: 13px;
    }

    .more {
        margin-left: auto;
    }

    .group-head .more {
        margin-right: 10px;
        margin-bottom: 2px;
    }

.logic {
    width: 160px;
    height: 74px;
    margin-left: 20px;
    padding: 0 18px 0 26px;
    color: var(--muted);
}

    .logic .select-text {
        padding-bottom: 2px;
        font-size: 28px;
        letter-spacing: 1px;
    }

.group-count {
    margin-left: 13px;
    padding-bottom: 2px;
    font-size: 23.800px;
    color: var(--muted);
}

.condition {
    display: flex;
    align-items: center;
    height: 100px;
    margin: 12px 0 0 176px;
    padding: 0 26px 0 16px;
    border: 2px solid var(--line);
    border-radius: 8px;
    background: #fff;
}

.chip-type {
    width: 190px;
    padding-right: 8px;
    border: 2px solid #bdbdbd;
    font-size: 24px;
}

.type-ic {
    width: 36px;
    height: 36px;
    margin-right: 3px;
    color: #5f6063;
}

.chip-const {
    width: 193px;
    margin-left: 13px;
    padding-right: 6px;
}

    .chip-const .type-ic {
        margin-left: -2px;
        margin-right: 5px;
    }

.condition .select {
    height: 64px;
    padding-left: 14px;
    background: #fbfcfc;
    color: var(--muted);
}

    .condition .select label {
        background: #fff;
        height: 20px;
        line-height: 20px;
        top: -16px;
        letter-spacing: 0.200px;
    }

.condition .f-ind {
    width: 240px;
    margin-left: 12px;
    padding-right: 18px;
}

.f-ind .select-text {
    padding-bottom: 4px;
    font-size: 27px;
    letter-spacing: 0.600px;
}

.f-op .select-text {
    padding-bottom: 4px;
    font-size: 28px;
    letter-spacing: 0.700px;
}

.condition .f-off,
.condition .f-val {
    height: 60px;
    margin-left: 12px;
    padding-left: 15px;
    color: var(--text);
    font-size: 26px;
}

.condition .f-off {
    width: 160px;
    margin-right: 13px;
}

.condition .f-val {
    width: 200px;
    margin-left: 13px;
}

.condition .f-op {
    width: 196px;
    margin: 0 13px;
    padding-right: 19px;
}

    .condition .f-op > .ic40 {
        margin-left: -6px;
    }

.group-actions {
    display: flex;
    gap: 12px;
    margin: 16px 0 0 -6px;
}

.btn-add {
    width: 162px;
    padding-left: 16px;
    border-color: #80c685;
    color: var(--green);
    font-size: 23.700px;
}

.btn-cond {
    width: 200px;
}

/* settings */
.settings {
    height: 866px;
    padding: 16px 33px 0;
}

.settings-head {
    display: flex;
    align-items: center;
    gap: 17px;
    height: 44px;
    margin-left: -1px;
    letter-spacing: 0.400px;
    color: var(--muted);
}

.settings h2 {
    margin-top: 20px;
    font-size: 28px;
    font-weight: 600;
    line-height: 36px;
    letter-spacing: 0.200px;
}

.settings-desc {
    margin-top: 4px;
    font-size: 26px;
    line-height: 38px;
    letter-spacing: 0.300px;
    color: var(--muted);
}

.settings-grid {
    display: grid;
    grid-template-columns: 422px 422px;
    column-gap: 32px;
    row-gap: 32px;
    margin-top: 30px;
}

.field {
    height: 74px;
    padding: 0 26px;
    color: var(--muted);
}

.field > .ic40 {
    margin-right: -9px;
}

    .field .ph {
        padding-bottom: 4px;
        font-size: 26px;
        letter-spacing: 0.150px;
    }

    .field .tf {
        font-size: 27.500px;
        letter-spacing: 0.500px;
    }

.dark {
    color: var(--text);
}

.unit {
    margin-left: auto;
}

.helper {
    width: 366px;
    margin: 8px 0 0 28px;
    font-size: 23.800px;
    line-height: 40px;
    color: var(--muted);
}

/* backtests */
.empty {
    display: flex;
    flex-direction: column;
    align-items: center;
    width: 878px;
    height: 512px;
    margin: 16px 0 0 32px;
    padding: 56px 0 0 2px;
    border: 2px dashed #a3d7a8;
    border-radius: 20px;
    text-align: center;
}

.empty-tile {
    display: flex;
    align-items: center;
    justify-content: center;
    width: 96px;
    height: 96px;
    border-radius: 24px;
    background: #dfefe2;
    color: var(--green);
}

.empty-tag {
    margin-top: 20px;
    font-family: var(--mono);
    font-size: 20.800px;
    font-weight: 600;
    line-height: 30px;
    letter-spacing: 2.100px;
    color: var(--green);
}

.empty h3 {
    margin-top: 23px;
    font-size: 30px;
    font-weight: 600;
    line-height: 40px;
    letter-spacing: -0.150px;
}

.empty p {
    width: 680px;
    margin-top: 24px;
    font-size: 26px;
    line-height: 40px;
    letter-spacing: 0.200px;
    color: var(--muted);
}

.btn-primary {
    width: 238px;
    margin: 27px 2px 0 0;
    padding: 0 0 1px 14px;
    background: var(--green);
    color: #fff;
    box-shadow: 0 3px 4px rgba(0, 0, 0, 0.3);
}
```

FILE: chart.js
```js
const NS = 'http://www.w3.org/2000/svg';
const svg = document.getElementById('chart');

const UP = '#26a69a';
const DOWN = '#ef5350';
const STEP = 7.785;
const X0 = 42.5;
const PLOT_W = 786;

// direction, body top, body bottom, wick top, wick bottom, volume (all in ticks, 6 ticks = 1 unit)
const candles = `
R 162 204 162 204 12|G 192 204 192 210 12|G 165 200 160 204 18|R 170 186 166 190 12|G 172 184 168 188 12
R 172 264 160 282 78|R 258 300 252 300 30|G 282 300 270 312 36|G 264 288 243 300 18|R 264 306 258 306 24
G 294 306 294 342 18|R 294 306 270 306 12|G 294 306 282 312 30|R 294 318 294 324 12|R 312 330 306 330 12
G 300 330 294 330 6|R 300 312 288 312 18|G 294 312 276 312 24|G 276 300 270 300 12|R 276 288 258 288 12
R 282 306 282 312 12|G 294 306 294 318 18|G 294 300 294 306 18|R 294 324 288 324 12|G 312 324 294 324 12
G 294 318 294 318 12|G 294 300 282 306 6|G 258 300 252 300 12|R 258 276 258 282 12|R 270 282 252 282 12
R 276 288 276 300 12|G 258 288 258 294 12|R 258 270 252 270 12|G 264 270 258 276 12|G 258 270 258 270 12
G 210 264 204 288 18|G 192 216 174 228 12|G 192 198 180 210 18|R 192 204 192 210 12|R 198 234 198 234 12
R 228 234 222 240 12|R 228 243 222 243 12|G 216 243 204 243 6|R 216 222 192 222 12|R 216 252 216 252 12
G 204 252 198 252 12|R 204 216 186 216 12|G 198 216 174 222 12|R 198 210 180 216 12|G 198 210 198 216 18
G 198 204 186 204 12|R 198 204 180 216 12|G 198 204 192 228 48|R 198 243 198 243 18|R 234 258 234 258 6
R 252 258 246 258 6|R 252 276 252 276 18|R 270 306 270 306 12|G 282 306 270 306 12|R 282 288 270 288 18
G 282 288 276 294 12|G 258 288 252 288 18|R 258 270 243 270 12|R 264 306 258 312 12|R 300 306 300 324 18
G 294 306 294 306 12|R 294 306 264 306 24|R 300 324 294 324 12|G 312 324 312 324 6|R 312 366 312 378 18
G 324 366 318 372 12|G 306 330 282 330 18|G 300 312 300 318 18|R 300 312 294 312 12|G 288 312 282 312 12
G 282 294 270 300 18|R 282 294 282 294 12|R 288 300 288 306 12|G 288 300 288 312 18|G 264 294 258 300 18
G 264 270 264 282 12|G 234 270 228 270 18|R 234 276 234 276 12|R 270 294 258 294 12|R 288 300 282 300 30
G 288 300 276 300 30|G 252 294 243 300 18|G 252 257 246 264 12|R 252 258 246 264 12|R 252 282 252 282 12
G 270 282 264 282 12|G 264 276 264 288 6|G 264 270 264 288 6|G 258 270 252 270 12|R 258 270 252 270 12
G 246 270 246 276 12|G 228 252 210 264 24|R 228 252 222 264 18|G 228 252 216 252 18|R 228 240 222 246 12
R 234 246 234 250 18`.trim().split(/[|\n]/).map(row => row.trim().split(' '));

const rsi = [847, 843, 828, 837, 833, 884, 897, 892, 877, 894, 890, 891, 888, 899, 903, 884, 885, 879, 862, 864,
    879, 875, 873, 892, 884, 864, 863, 838, 849, 851, 860, 838, 843, 840, 834, 799, 786, 786, 797, 831, 832, 836,
    819, 822, 851, 820, 827, 818, 823, 819, 817, 820, 818, 860, 876, 877, 893, 914, 891, 893, 889, 862, 866, 899,
    900, 891, 893, 909, 898, 930, 892, 874, 869, 874, 853, 851, 857, 861, 856, 832, 829, 807, 845, 862, 862, 860,
    828, 828, 829, 852, 848, 843, 842, 832, 846, 823, 803, 829, 813, 823, 828];

function add(tag, attrs, text) {
    const el = document.createElementNS(NS, tag);
    for (const key in attrs) el.setAttribute(key, attrs[key]);
    if (text) el.textContent = text;
    svg.appendChild(el);
    return el;
}

const rect = (x, y, width, height, fill, extra) => add('rect', { x, y, width, height, fill, ...extra });
const cx = i => X0 + (i - 5) * STEP;

// grid
[25, 56, 87, 111, 142, 173].forEach(y => rect(0, y, PLOT_W, 1, 'rgba(42,46,57,0.06)'));
[42, 135, 229, 322, 415, 509, 602, 696, 781].forEach(x => rect(x, 7, 1, 176, 'rgba(42,46,57,0.06)'));
rect(786, 7, 1, 177, 'rgba(42,46,57,0.08)');
rect(0, 183, 787, 1, 'rgba(42,46,57,0.08)');

// signal bar
rect(536, 7, 8, 85, 'rgba(38,166,154,0.09)');

// volume
candles.forEach((c, i) => {
    const h = c[5] / 6;
    rect(Math.max(0, Math.round(cx(i) - 3.5)), 92 - h, 7, h, c[0] === 'G' ? UP : DOWN, { opacity: 0.4 });
});

// candles
candles.forEach((c, i) => {
    const fill = c[0] === 'G' ? UP : DOWN;
    const [top, bottom, high, low] = c.slice(1, 5).map(v => v / 6);
    const x = Math.round(cx(i) - 0.5);
    rect(x, high, 1, low - high, fill);
    rect(x - 2, top, 5, bottom - top, fill);
});

const dotted = (y, stroke, opacity) => add('path', {
    d: `M0 ${y}H${PLOT_W}`, stroke, opacity, 'stroke-width': 1.2, 'stroke-dasharray': '2 2', fill: 'none'
});
dotted(40.5, DOWN, 0.9);
dotted(89.5, DOWN, 0.45);
dotted(130.5, '#ff9800', 0.9);
dotted(154.5, '#ff9800', 0.9);

// rsi line
add('path', {
    d: 'M0 139.6L' + rsi.map((v, i) => `${cx(i).toFixed(1)} ${(v / 6).toFixed(1)}`).join('L'),
    stroke: '#2196f3', 'stroke-width': 2, 'stroke-linejoin': 'round', fill: 'none'
});

// buy arrow
add('path', { d: 'M540.5 64.5l5 5.5h-2.8v4.7h-4.4v-4.7h-2.8z', fill: '#7ecac3' });

// pane separator
rect(0, 92, 858, 1, '#e0e3eb');

// price scale
[['62800.00', 25], ['62400.00', 56], ['100.00', 111], ['0.00', 173]].forEach(([t, y]) =>
    add('text', { x: 796, y: y + 4, class: 'axis' }, t));
// only the end of this label shows next to the volume tag
add('text', { x: 846, y: 91, class: 'axis', 'text-anchor': 'end' }, '00');

[['62609.67', 32, 17, 67, DOWN], ['34.07', 76, 16, 47, DOWN], ['70.00', 113, 17, 47, '#ff9800'],
    ['56.31', 130, 17, 47, '#2196f3'], ['30.00', 147, 17, 47, '#ff9800']].forEach(([t, y, h, w, fill]) => {
    add('path', { d: `M786 ${y}h${w - 1}q1 0 1 1v${h - 2}q0 1-1 1h${1 - w}z`, fill });
    add('text', { x: 796, y: y + 13, class: 'axis axis-tag' }, t);
});

// time scale
['01:00', '02:00', '03:00', '04:00', '05:00', '06:00', '07:00', '08:00'].forEach((t, i) =>
    add('text', { x: X0 - 0.7 + i * STEP * 12, y: 201, class: 'axis axis-bold', 'text-anchor': 'middle' }, t));
const clip = add('clipPath', { id: 'plot-clip' });
const box = rect(0, 7, PLOT_W, 210, '#000');
clip.appendChild(box);
add('text', { x: 766, y: 201, class: 'axis', 'clip-path': 'url(#plot-clip)' }, '08:55');
```
